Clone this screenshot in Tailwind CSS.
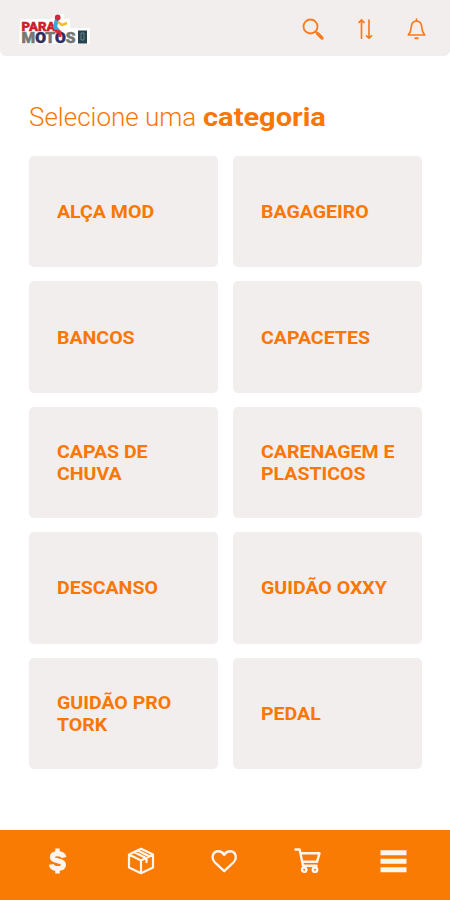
<!DOCTYPE html>
<html lang="pt-BR">
<head>
<meta charset="utf-8">
<title>Para Motos</title>
<script src="https://cdn.jsdelivr.net/npm/@tailwindcss/browser@4"></script>
</head>
<body class="flex h-[900px] w-[450px] flex-col overflow-hidden bg-white font-['Roboto',sans-serif] text-[#fa7704]">
<header class="flex h-[56px] shrink-0 items-center rounded-b-[6px] bg-[#f1eeed]">
  <svg class="ml-[19px] mt-[3px] h-[31px] w-[72px]" viewBox="0 0 72 31" font-family="Roboto, sans-serif" font-weight="900">
    <path d="M2 6H34L38 0H44V6H50V15H70V29H1Z" fill="#fff" stroke="#fff" stroke-width="2" stroke-linejoin="round"/>
    <text x="2.500" y="16.500" font-size="13" textLength="34" lengthAdjust="spacingAndGlyphs" fill="#ce202b" stroke="#ce202b" stroke-width=".5">PARA</text>
    <text x="2.500" y="28.500" font-size="15.5" textLength="54" lengthAdjust="spacingAndGlyphs" fill="#77776f" stroke="#77776f" stroke-width=".5">M<tspan fill="#2c2d60" stroke="#2c2d60">O</tspan>T<tspan fill="#2c2d60" stroke="#2c2d60">O</tspan>S</text>
    <path d="M38 5L36 13L40 18" fill="none" stroke="#3aa7e0" stroke-width="4"/>
    <path d="M39 8L43 11L48 9" fill="none" stroke="#f5bd27" stroke-width="2.8"/>
    <path d="M36 17L41 18L41 23" fill="none" stroke="#d72a32" stroke-width="3"/>
    <circle cx="38.700" cy="3.500" r="2.900" fill="#c72d3b"/>
    <path d="M59 16.500H68V29.500H59Z" fill="#25434f"/>
    <path d="M62 19h3v7h-3z" fill="none" stroke="#71858a" stroke-width="1"/>
  </svg>
  <svg class="ml-[211px] mt-[3px] h-6 w-6" viewBox="0 0 24 24" fill="none" stroke="#f97b20">
    <circle cx="8.500" cy="8.500" r="7" stroke-width="1.800"/><path d="M13.500 13.500L15.500 15.500" stroke-width="1.800"/><path d="M15.500 15.500L20 20" stroke-width="3.300" stroke-linecap="round"/>
  </svg>
  <svg class="ml-[31px] mt-[3px] h-6 w-4" viewBox="0 0 16 24" fill="none" stroke="#f97b20" stroke-width="1.700" stroke-linecap="round" stroke-linejoin="round">
    <path d="M4.500 20.200V2M2 4.300L4.500 2L7 4.300M12 2V20.200M9.500 17.800L12 20.200L14.500 17.800"/>
  </svg>
  <svg class="ml-[33px] mt-[3px] h-6 w-5" viewBox="0 0 20 24" fill="none" stroke="#f97b20" stroke-width="1.700" stroke-linecap="round" stroke-linejoin="round">
    <path d="M10.500 3V1.200M2.300 17H18.700C16.500 14.500 15.900 12.500 15.700 9C15.500 5.500 13.500 3.200 10.500 3.200S5.500 5.500 5.300 9C5.100 12.500 4.500 14.500 2.300 17Z"/><path d="M9.300 20.300H11.700" stroke-width="2"/>
  </svg>
</header>
<main class="flex-1 px-[28.500px] pt-[47px]">
  <h1 class="flex h-[30px] items-center whitespace-pre text-[25px] leading-[30px]"><span class="w-[174px] origin-left scale-x-[1.040] font-light">Selecione uma </span><b class="origin-left scale-x-[1.160] font-bold">categoria</b></h1>
  <div class="mt-[23px] grid auto-rows-[111.400px] grid-cols-[189.500px_189.500px] gap-x-[14.500px] gap-y-[14px] text-[18px] leading-[22px] font-bold *:flex *:items-center *:rounded-[5px] *:bg-[#f1eeed] *:pt-px *:pl-[28px] **:[span]:origin-left **:[span]:scale-x-[1.085]">
    <div><span>ALÇA MOD</span></div>
    <div><span>BAGAGEIRO</span></div>
    <div><span>BANCOS</span></div>
    <div><span>CAPACETES</span></div>
    <div><span>CAPAS DE<br>CHUVA</span></div>
    <div><span>CARENAGEM E<br>PLASTICOS</span></div>
    <div><span>DESCANSO</span></div>
    <div><span>GUIDÃO OXXY</span></div>
    <div><span>GUIDÃO PRO<br>TORK</span></div>
    <div><span>PEDAL</span></div>
  </div>
</main>
<nav class="flex h-[70.500px] shrink-0 items-start bg-[#fa7b03] pt-[17px] pl-[44px] text-[#fff5ef]">
  <svg class="h-7 w-7" viewBox="0 0 28 28" fill="none" stroke="currentColor"><path d="M13.500 1.500V6M13.500 22V26.500" stroke-width="4.500"/><path d="M20 10.500C19.500 8 17 6.800 14 6.800C10.700 6.800 8.300 7.900 8.300 10.200C8.300 15 19.500 12.500 19.500 17.800C19.500 20.500 17 21.500 13.700 21.500C9.900 21.500 7.800 20.300 7.300 17.300" stroke-width="5"/></svg>
  <svg class="ml-[55px] h-7 w-7" viewBox="0 0 28 28" fill="none" stroke="currentColor" stroke-width="2.200" stroke-linejoin="round" stroke-linecap="round"><path d="M14 1.800L26 7.500V20.500L14 26.200L2 20.500V7.500ZM2.500 7.800L14 13.500L25.500 7.800M14 13.500V26M7.300 5.200L19.500 11.200V15.200M10.800 3.500L22.500 9.500"/></svg>
  <svg class="ml-[56px] h-7 w-7" viewBox="0 0 28 28" fill="none" stroke="currentColor" stroke-width="2.400" stroke-linejoin="round"><path d="M13.200 24.200L4 15.500C0 11.500 1.200 4.500 7 4.200C10.200 4.100 12 5.800 13.200 7.800C14.400 5.800 16.200 4.100 19.400 4.200C25.200 4.500 26.400 11.500 22.400 15.500Z"/></svg>
  <svg class="ml-[55px] h-7 w-7" viewBox="0 0 28 28" fill="none" stroke="currentColor" stroke-width="2.400" stroke-linecap="round" stroke-linejoin="round"><path d="M1.500 2.500H5.700L9 18.800H22.500M6.500 6.300H25.500L23 14.800H8.500"/><circle cx="10.200" cy="22.700" r="2.200"/><circle cx="21" cy="22.700" r="2.200"/></svg>
  <svg class="ml-[58px] h-7 w-7" viewBox="0 0 28 28" fill="currentColor"><path d="M.5 3.200h26v5H.5zM.5 11.700h26v5H.5zM.5 20.200h26v5H.5z"/></svg>
</nav>
</body>
</html>
